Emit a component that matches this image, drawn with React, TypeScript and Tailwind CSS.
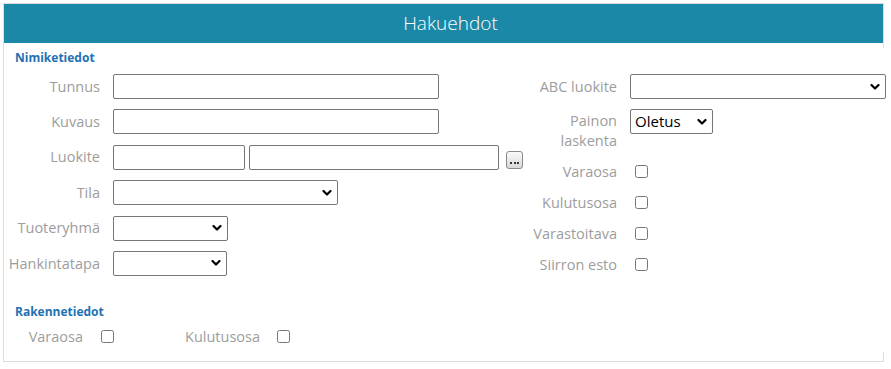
import React from "react";

function Chevron() {
  return (
    <svg
      width="10"
      height="7"
      viewBox="0 0 10 7"
      className="absolute right-[6px] top-1/2 -translate-y-1/2 pointer-events-none"
    >
      <path d="M1.5 1.5 L5 5 L8.5 1.5" stroke="#000" strokeWidth="2.2" fill="none" strokeLinecap="round" strokeLinejoin="round" />
    </svg>
  );
}

function Sel({ w, value }: { w: string; value?: string }) {
  return (
    <div className={`relative h-[25px] ${w}`}>
      <select
        defaultValue={value ?? ""}
        className="appearance-none w-full h-full border border-[#767676] rounded-[2px] bg-white pl-[4px] text-[15px] leading-[23px] text-black outline-none"
      >
        <option value="">{""}</option>
        {value ? <option value={value}>{value}</option> : null}
      </select>
      <Chevron />
    </div>
  );
}

function Input({ w }: { w: string }) {
  return <input type="text" className={`h-[25px] ${w} border border-[#767676] rounded-[2px] bg-white outline-none`} />;
}

function Check() {
  return <input type="checkbox" className="m-0 w-[13px] h-[13px]" />;
}

function LRow({ label, children }: { label: string; children: React.ReactNode }) {
  return (
    <div className="flex items-center h-[25px]">
      <div className="w-[96px] text-right text-[14.5px] text-[#9d9d9d] whitespace-nowrap">{label}</div>
      <div className="ml-[13px] flex items-center">{children}</div>
    </div>
  );
}

function RCheck({ label }: { label: string }) {
  return (
    <div className="flex items-center h-[21px]">
      <div className="w-[87px] text-right text-[14.5px] text-[#9d9d9d] whitespace-nowrap">{label}</div>
      <div className="ml-[18px] flex items-center">
        <Check />
      </div>
    </div>
  );
}

export default function App() {
  return (
    <div className="font-['Open_Sans','Noto_Sans',sans-serif] bg-white w-[891px] h-[369px] pt-[3px] pl-[3px]">
      <div className="w-[881px] h-[359px] border border-[#dddddd] bg-white">
        <div className="h-[39px] bg-[#1c88a7] flex items-center justify-center pl-[14px]">
          <span className="text-white text-[19px] font-light leading-none -mt-[1px]">Hakuehdot</span>
        </div>
        <div className="mt-[5px] mr-[-3px] bg-white relative">
          <div className="pl-[11px] text-[12px] leading-[20px] font-bold text-[#2271b3]">Nimiketiedot</div>
          <div className="mt-[6px] flex">
            <div className="w-[526px] flex flex-col gap-[10.4px]">
              <LRow label="Tunnus">
                <Input w="w-[326px]" />
              </LRow>
              <LRow label="Kuvaus">
                <Input w="w-[326px]" />
              </LRow>
              <LRow label="Luokite">
                <Input w="w-[132px]" />
                <div className="ml-[4px]">
                  <Input w="w-[250px]" />
                </div>
                <div className="ml-[7px] self-end mb-[1px] w-[17px] h-[18px] rounded-[3px] border border-[#8a8a8a] bg-gradient-to-b from-[#fafafa] to-[#d9d9d9] flex items-end justify-center pb-[4px] gap-[1.5px]">
                  <span className="w-[2px] h-[2px] bg-[#333]" />
                  <span className="w-[2px] h-[2px] bg-[#333]" />
                  <span className="w-[2px] h-[2px] bg-[#333]" />
                </div>
              </LRow>
              <LRow label="Tila">
                <Sel w="w-[225px]" />
              </LRow>
              <LRow label="Tuoteryhmä">
                <Sel w="w-[115px]" />
              </LRow>
              <LRow label="Hankintatapa">
                <Sel w="w-[114px]" />
              </LRow>
            </div>
            <div className="flex flex-col gap-[10px]">
              <div className="flex items-center h-[25px]">
                <div className="w-[87px] text-right text-[14.5px] text-[#9d9d9d] whitespace-nowrap">ABC luokite</div>
                <div className="ml-[13px]">
                  <Sel w="w-[256px]" />
                </div>
              </div>
              <div className="flex items-start h-[42px]">
                <div className="w-[87px] pt-[2px] text-right text-[14.5px] leading-[20px] text-[#9d9d9d]">
                  Painon
                  <br />
                  laskenta
                </div>
                <div className="ml-[13px]">
                  <Sel w="w-[83px]" value="Oletus" />
                </div>
              </div>
              <RCheck label="Varaosa" />
              <RCheck label="Kulutusosa" />
              <RCheck label="Varastoitava" />
              <RCheck label="Siirron esto" />
            </div>
          </div>
          <div className="mt-[26px] pl-[11px] text-[12px] leading-[20px] font-bold text-[#2271b3]">Rakennetiedot</div>
          <div className="mt-[5px] h-[20px] pb-[5px] box-content flex items-center">
            <div className="w-[79px] text-right text-[14.5px] text-[#9d9d9d]">Varaosa</div>
            <div className="ml-[18px] flex items-center">
              <Check />
            </div>
            <div className="w-[146px] text-right text-[14.5px] text-[#9d9d9d]">Kulutusosa</div>
            <div className="ml-[17px] flex items-center">
              <Check />
            </div>
          </div>
        </div>
      </div>
    </div>
  );
}
